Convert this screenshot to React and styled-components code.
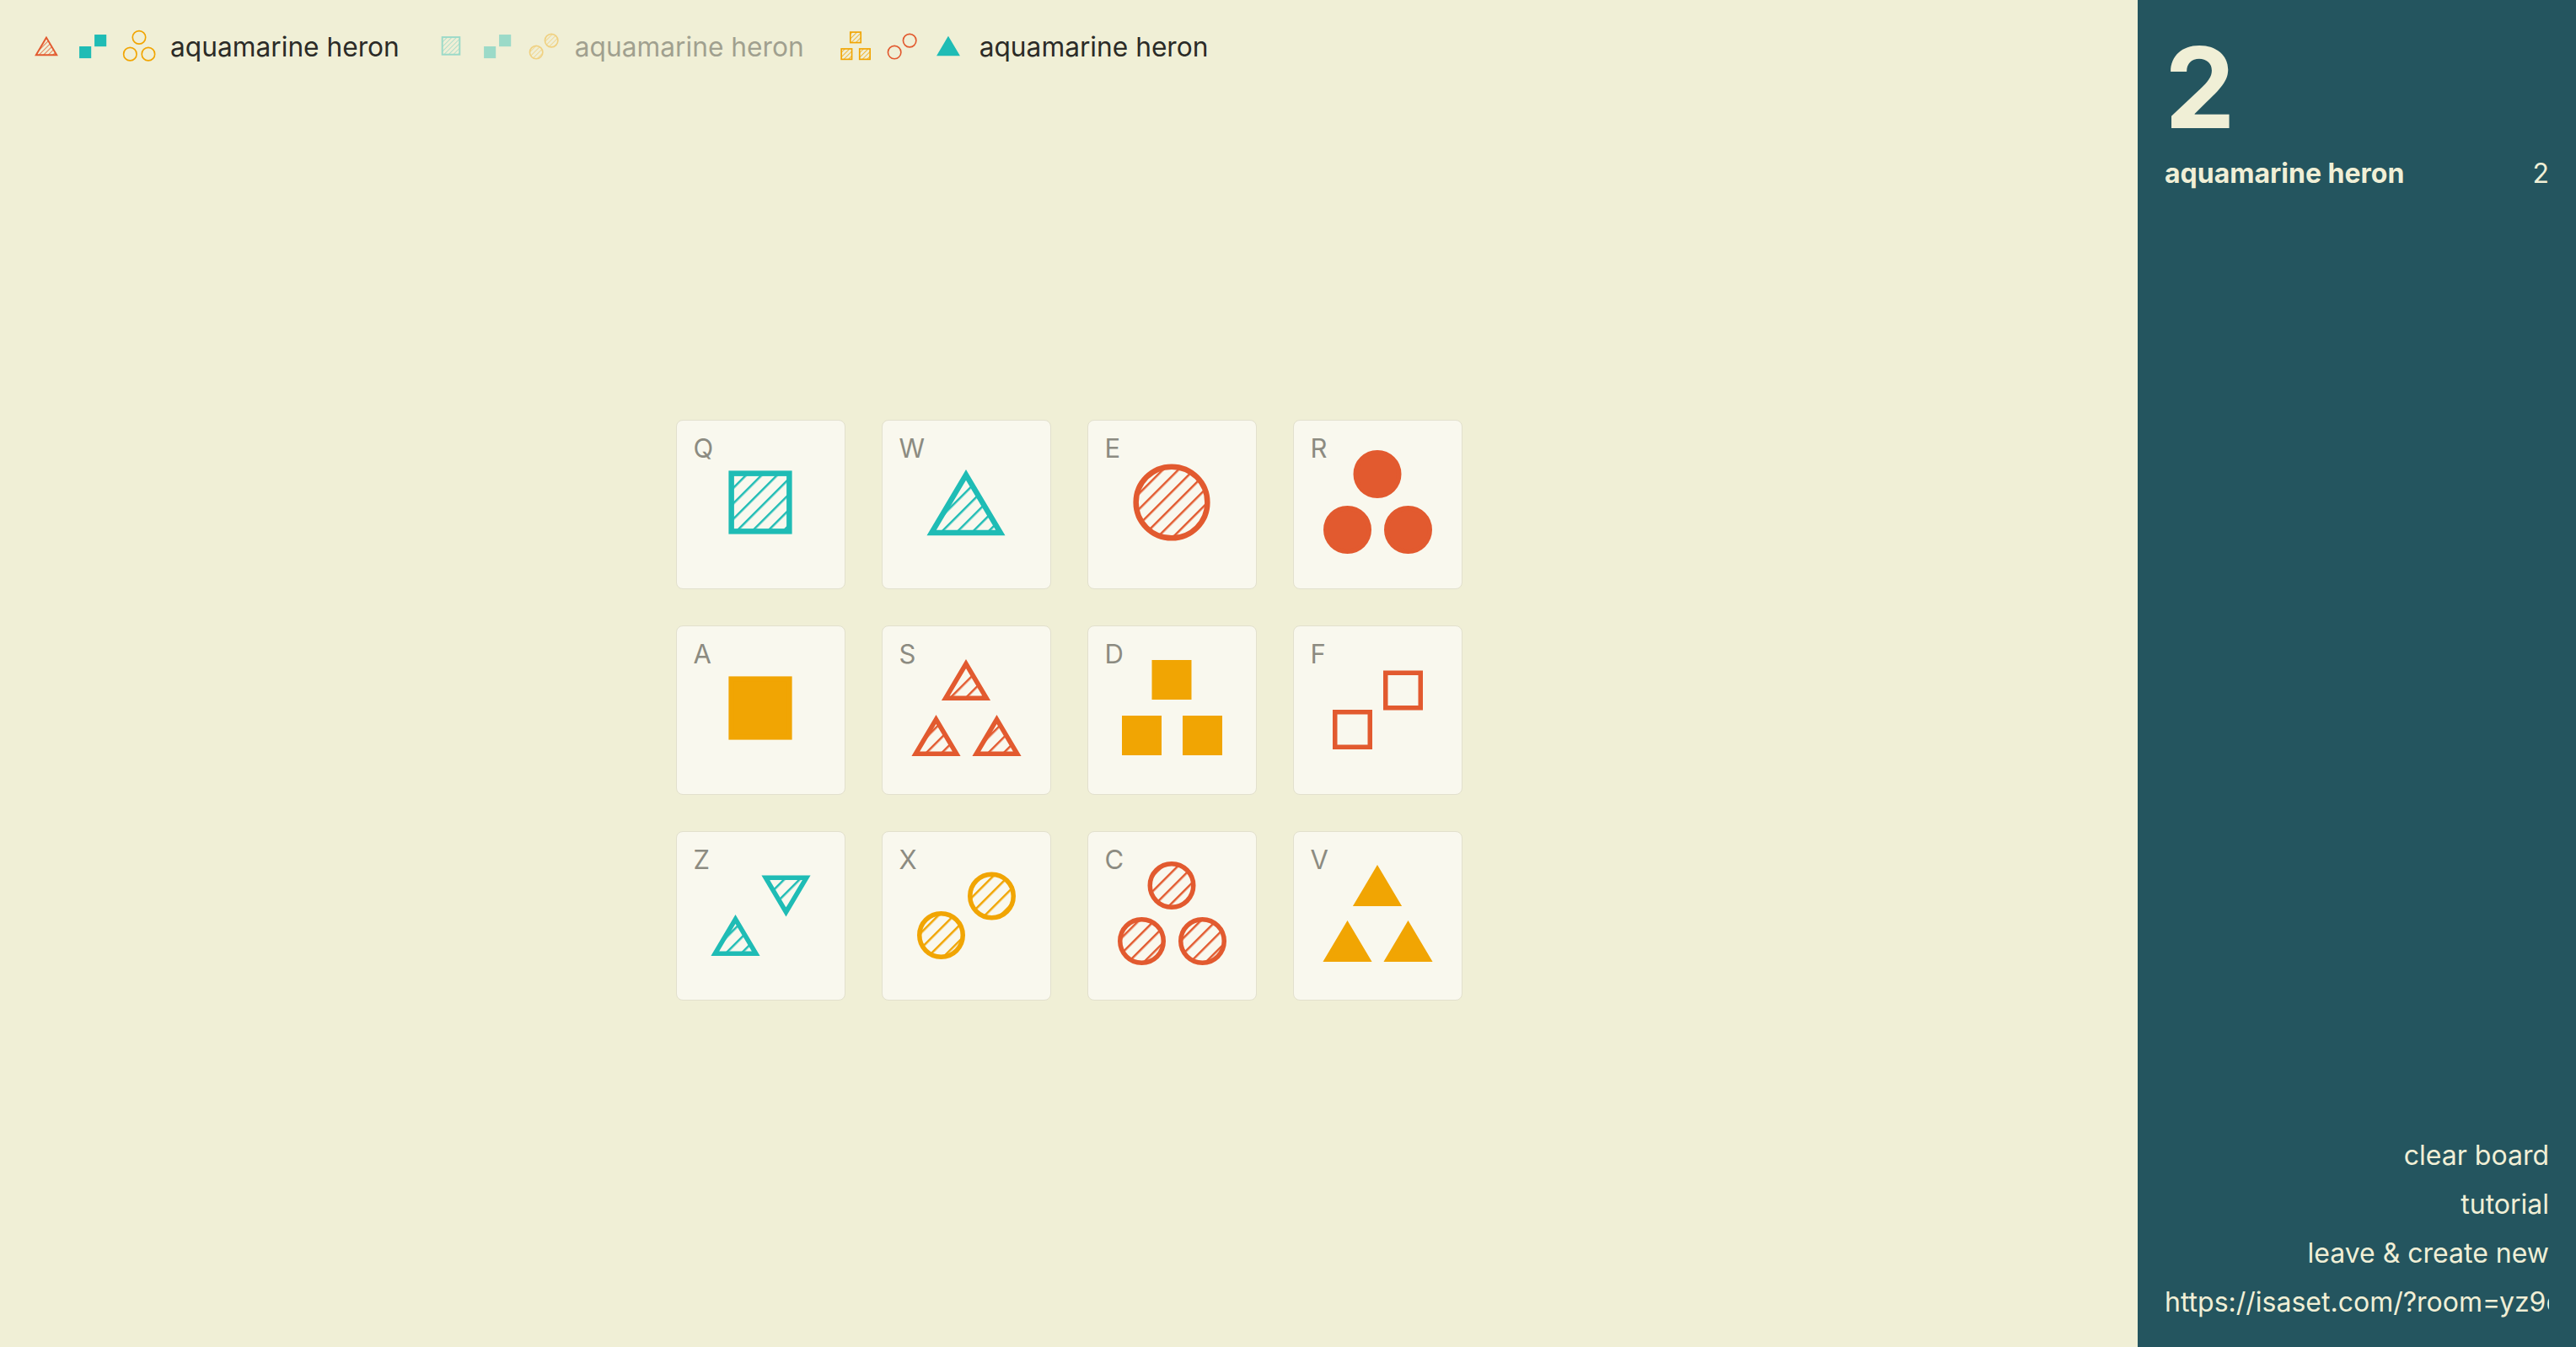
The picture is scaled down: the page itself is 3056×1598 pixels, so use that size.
import styled, { createGlobalStyle } from 'styled-components';

const TEAL = '#1fbcb5';
const RED = '#e25a2f';
const AMBER = '#f1a503';
const CREAM = '#f0efd6';

const GlobalStyle = createGlobalStyle`
  html, body {
    margin: 0;
    padding: 0;
    background: ${CREAM};
    font-family: Inter, "Noto Sans", sans-serif;
  }
`;

const Page = styled.div`
  display: flex;
  height: 100vh;
  overflow: hidden;
`;

const Main = styled.div`
  flex: 1;
  display: flex;
  flex-direction: column;
  min-width: 0;
`;

const TopBar = styled.div`
  display: flex;
  align-items: center;
  gap: 34px;
  padding: 28px 28px 5px;
`;

const Entry = styled.div`
  display: flex;
  align-items: center;
  gap: 1px;
  opacity: ${(p) => (p.$faded ? 0.4 : 1)};
`;

const EntryName = styled.span`
  margin-left: 9px;
  font-size: 31.7px;
  color: #2b2b27;
  white-space: nowrap;
`;

const Board = styled.div`
  flex: 1;
  display: flex;
  align-items: center;
  justify-content: center;
`;

const Grid = styled.div`
  display: grid;
  grid-template-columns: repeat(4, 201px);
  grid-auto-rows: 201px;
  gap: 43px;
`;

const Card = styled.div`
  box-sizing: border-box;
  display: grid;
  background: #f9f8ee;
  border: 1px solid #e2e0cd;
  border-radius: 8px;
`;

const Key = styled.span`
  grid-area: 1 / 1;
  align-self: start;
  justify-self: start;
  padding: 14px 0 0 20px;
  font-size: 31px;
  line-height: normal;
  color: #8c8b81;
`;

const ShapeSvg = styled.svg`
  grid-area: 1 / 1;
  display: block;
`;

const Sidebar = styled.aside`
  width: 520px;
  flex-shrink: 0;
  box-sizing: border-box;
  display: flex;
  flex-direction: column;
  padding: 37px 32px 24px 32px;
  background: #24555f;
  color: ${CREAM};
`;

const BigCount = styled.div`
  font-size: 133px;
  font-weight: 700;
  line-height: 1;
`;

const PlayerRow = styled.div`
  display: flex;
  justify-content: space-between;
  margin-top: 16px;
  font-size: 32px;
`;

const PlayerName = styled.span`
  font-weight: 700;
`;

const Links = styled.div`
  margin-top: auto;
  display: flex;
  flex-direction: column;
  text-align: right;
  font-size: 32px;
  line-height: 58px;
`;

const RoomUrl = styled.div`
  overflow: hidden;
  white-space: nowrap;
  text-align: left;
`;

// where each symbol sits inside the 200x200 card space
const layouts = {
  1: [{ x: 100, y: 98, s: 1.6 }],
  2: [
    { x: 70.5, y: 123.5, s: 1 },
    { x: 130.5, y: 77, s: 1, flip: true },
  ],
  3: [
    { x: 100, y: 64.5, s: 1 },
    { x: 64.5, y: 130.5, s: 1 },
    { x: 136.5, y: 130.5, s: 1 },
  ],
};

function drawShape(kind, { x, y, s, flip }, sw, props, key) {
  if (kind === 'square') {
    const side = 47 * s;
    return (
      <rect key={key} x={x - side / 2 + sw / 2} y={y - side / 2 + sw / 2}
        width={side - sw} height={side - sw} {...props} />
    );
  }
  if (kind === 'circle') {
    return <circle key={key} cx={x} cy={y} r={(57 * s - sw) / 2} {...props} />;
  }
  const w = 58 * s - 1.73 * sw;
  const h = 49 * s;
  const apex = flip ? y + h / 2 - sw : y - h / 2 + sw;
  const base = flip ? y - h / 2 + sw / 2 : y + h / 2 - sw / 2;
  return (
    <polygon key={key}
      points={`${x},${apex} ${x - w / 2},${base} ${x + w / 2},${base}`}
      strokeLinejoin="miter" {...props} />
  );
}

function Symbol({ card, uid, size, viewBox }) {
  const { shape, color, fill, count } = card;
  const sw = count === 1 ? 6.5 : 5.5;
  const patternId = `hatch-${uid}`;
  const fillValue = fill === 'solid' ? color : fill === 'hatch' ? `url(#${patternId})` : 'none';
  return (
    <ShapeSvg width={size} height={size} viewBox={viewBox}>
      {fill === 'hatch' && (
        <defs>
          <pattern id={patternId} patternUnits="userSpaceOnUse" width="13" height="13"
            patternTransform="rotate(45)">
            <line x1="0" y1="-1" x2="0" y2="14" stroke={color} strokeWidth="5" />
          </pattern>
        </defs>
      )}
      {layouts[count].map((pos, i) =>
        drawShape(shape, pos, sw, { fill: fillValue, stroke: color, strokeWidth: sw }, i)
      )}
    </ShapeSvg>
  );
}

const cards = [
  { key: 'Q', shape: 'square', color: TEAL, fill: 'hatch', count: 1 },
  { key: 'W', shape: 'triangle', color: TEAL, fill: 'hatch', count: 1 },
  { key: 'E', shape: 'circle', color: RED, fill: 'hatch', count: 1 },
  { key: 'R', shape: 'circle', color: RED, fill: 'solid', count: 3 },
  { key: 'A', shape: 'square', color: AMBER, fill: 'solid', count: 1 },
  { key: 'S', shape: 'triangle', color: RED, fill: 'hatch', count: 3 },
  { key: 'D', shape: 'square', color: AMBER, fill: 'solid', count: 3 },
  { key: 'F', shape: 'square', color: RED, fill: 'empty', count: 2 },
  { key: 'Z', shape: 'triangle', color: TEAL, fill: 'hatch', count: 2 },
  { key: 'X', shape: 'circle', color: AMBER, fill: 'hatch', count: 2 },
  { key: 'C', shape: 'circle', color: RED, fill: 'hatch', count: 3 },
  { key: 'V', shape: 'triangle', color: AMBER, fill: 'solid', count: 3 },
];

const history = [
  {
    name: 'aquamarine heron',
    faded: false,
    set: [
      { shape: 'triangle', color: RED, fill: 'hatch', count: 1 },
      { shape: 'square', color: TEAL, fill: 'solid', count: 2 },
      { shape: 'circle', color: AMBER, fill: 'empty', count: 3 },
    ],
  },
  {
    name: 'aquamarine heron',
    faded: true,
    set: [
      { shape: 'square', color: TEAL, fill: 'hatch', count: 1 },
      { shape: 'square', color: TEAL, fill: 'solid', count: 2 },
      { shape: 'circle', color: AMBER, fill: 'hatch', count: 2 },
    ],
  },
  {
    name: 'aquamarine heron',
    faded: false,
    set: [
      { shape: 'square', color: AMBER, fill: 'hatch', count: 3 },
      { shape: 'circle', color: RED, fill: 'empty', count: 2 },
      { shape: 'triangle', color: TEAL, fill: 'solid', count: 1 },
    ],
  },
];

export default function App() {
  return (
    <Page>
      <GlobalStyle />
      <Main>
        <TopBar>
          {history.map((entry, i) => (
            <Entry key={i} $faded={entry.faded}>
              {entry.set.map((card, j) => (
                <Symbol key={j} card={card} uid={`h${i}-${j}`} size={54} viewBox="10 10 180 180" />
              ))}
              <EntryName>{entry.name}</EntryName>
            </Entry>
          ))}
        </TopBar>
        <Board>
          <Grid>
            {cards.map((card) => (
              <Card key={card.key}>
                <Symbol card={card} uid={card.key} size={199} viewBox="1 1 199 199" />
                <Key>{card.key}</Key>
              </Card>
            ))}
          </Grid>
        </Board>
      </Main>
      <Sidebar>
        <BigCount>2</BigCount>
        <PlayerRow>
          <PlayerName>aquamarine heron</PlayerName>
          <span>2</span>
        </PlayerRow>
        <Links>
          <div>clear board</div>
          <div>tutorial</div>
          <div>leave &amp; create new</div>
          <RoomUrl>https://isaset.com/?room=yz9d2k</RoomUrl>
        </Links>
      </Sidebar>
    </Page>
  );
}
